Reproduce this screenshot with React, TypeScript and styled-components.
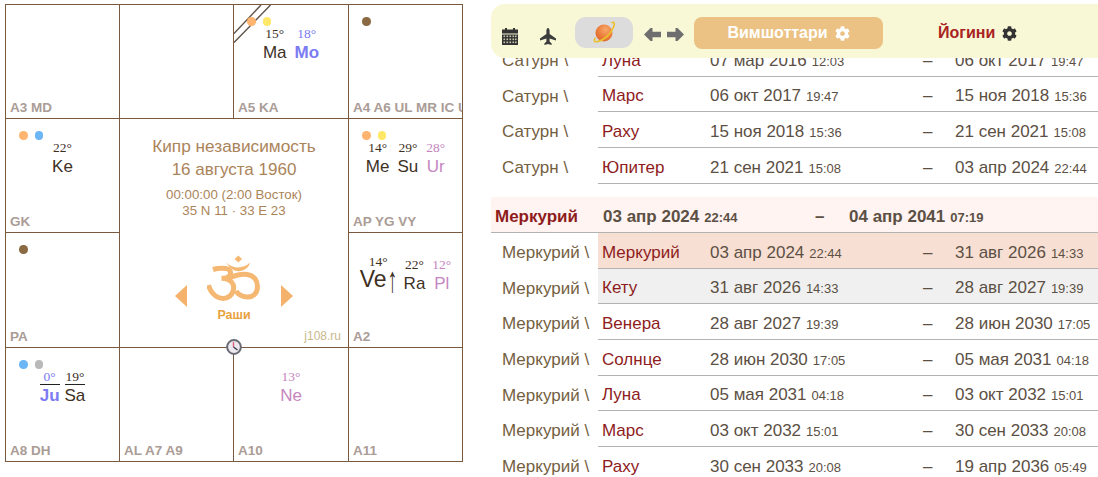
import React from "react";
import styled, { createGlobalStyle } from "styled-components";
import { FaCog } from "react-icons/fa";

const GlobalStyle = createGlobalStyle`
  html, body {
    margin: 0;
    background: #fff;
    font-family: "Liberation Sans", Arial, sans-serif;
  }
`;

type PlanetData = {
  name: string;
  degree: string;
  tone?: "dark" | "blue" | "pink";
  bold?: boolean;
  big?: boolean;
  ruled?: boolean;
  rising?: boolean;
};

type CellData = {
  label?: string;
  dots?: string[];
  planets?: PlanetData[];
  gap?: number;
  stripes?: boolean;
};

const toneColors = { dark: "#40301f", blue: "#7b7bf2", pink: "#c586c0" };

const ORANGE = "#ffb570";
const BLUE = "#6cb6f5";
const YELLOW = "#ffe868";
const BROWN = "#8a6a42";
const GRAY = "#b9b9b9";

const topCells: CellData[] = [
  { label: "A3 MD" },
  {},
  {
    label: "A5 KA",
    dots: [ORANGE, YELLOW],
    stripes: true,
    planets: [
      { name: "Ma", degree: "15°" },
      { name: "Mo", degree: "18°", tone: "blue", bold: true },
    ],
  },
  { label: "A4 A6 UL MR IC UP", dots: [BROWN] },
];

const bottomCells: CellData[] = [
  {
    label: "A8 DH",
    dots: [BLUE, GRAY],
    gap: 5,
    planets: [
      { name: "Ju", degree: "0°", tone: "blue", bold: true, ruled: true },
      { name: "Sa", degree: "19°", ruled: true },
    ],
  },
  { label: "AL A7 A9" },
  { label: "A10", planets: [{ name: "Ne", degree: "13°", tone: "pink" }] },
  { label: "A11" },
];

const keCell: CellData = {
  label: "GK",
  dots: [ORANGE, BLUE],
  planets: [{ name: "Ke", degree: "22°" }],
};
const meCell: CellData = {
  label: "AP YG VY",
  dots: [ORANGE, YELLOW],
  planets: [
    { name: "Me", degree: "14°" },
    { name: "Su", degree: "29°" },
    { name: "Ur", degree: "28°", tone: "pink" },
  ],
};
const paCell: CellData = { label: "PA", dots: [BROWN] };
const veCell: CellData = {
  label: "A2",
  gap: 7,
  planets: [
    { name: "Ve", degree: "14°", big: true, rising: true },
    { name: "Ra", degree: "22°" },
    { name: "Pl", degree: "12°", tone: "pink" },
  ],
};

type Period = {
  name: string;
  from: [string, string];
  to: [string, string];
  state?: "current" | "next";
};

const saturnRows: Period[] = [
  { name: "Луна", from: ["07 мар 2016", "12:03"], to: ["06 окт 2017", "19:47"] },
  { name: "Марс", from: ["06 окт 2017", "19:47"], to: ["15 ноя 2018", "15:36"] },
  { name: "Раху", from: ["15 ноя 2018", "15:36"], to: ["21 сен 2021", "15:08"] },
  { name: "Юпитер", from: ["21 сен 2021", "15:08"], to: ["03 апр 2024", "22:44"] },
];

const mercuryRows: Period[] = [
  { name: "Меркурий", from: ["03 апр 2024", "22:44"], to: ["31 авг 2026", "14:33"], state: "current" },
  { name: "Кету", from: ["31 авг 2026", "14:33"], to: ["28 авг 2027", "19:39"], state: "next" },
  { name: "Венера", from: ["28 авг 2027", "19:39"], to: ["28 июн 2030", "17:05"] },
  { name: "Солнце", from: ["28 июн 2030", "17:05"], to: ["05 мая 2031", "04:18"] },
  { name: "Луна", from: ["05 мая 2031", "04:18"], to: ["03 окт 2032", "15:01"] },
  { name: "Марс", from: ["03 окт 2032", "15:01"], to: ["30 сен 2033", "20:08"] },
  { name: "Раху", from: ["30 сен 2033", "20:08"], to: ["19 апр 2036", "05:49"] },
];

function CalendarIcon() {
  return (
    <svg width="16" height="17" viewBox="0 0 16 17" fill="#333">
      <rect x="3" y="0" width="2" height="3" />
      <rect x="11" y="0" width="2" height="3" />
      <rect x="0" y="1.5" width="16" height="4" />
      <path d="M0 6.5h16V17H0z" />
      <g fill="#f9f8d6" opacity="0.75">
        {[7.5, 10.5, 13.5].map((y) =>
          [1.5, 4.5, 7.5, 10.5, 13].map((x) => <rect key={`${x}-${y}`} x={x} y={y} width="1.6" height="1.6" />),
        )}
      </g>
    </svg>
  );
}

function PlaneIcon() {
  return (
    <svg width="16" height="17" viewBox="0 0 16 17" fill="#3c3c3c">
      <path d="M8 0c1 0 1.6 1.6 1.6 3.2V6L16 10.6V12.6L9.6 10.4V13.6L11.6 15.4V17L8 15.9 4.4 17V15.4L6.4 13.6V10.4L0 12.6V10.6L6.4 6V3.2C6.4 1.6 7 0 8 0z" />
    </svg>
  );
}

function ArrowIcon({ flip }: { flip?: boolean }) {
  return (
    <svg width="17" height="13" viewBox="0 0 17 13" fill="#6e6e6e" style={flip ? { transform: "scaleX(-1)" } : undefined}>
      <path d="M0 6.5 6.5 0 8.5 0 8.5 3.8H17V9.2H8.5V13H6.5z" />
    </svg>
  );
}

function PlanetIcon() {
  return (
    <svg width="24" height="24" viewBox="0 0 24 24">
      <defs>
        <radialGradient id="sphere" cx="0.6" cy="0.3" r="0.8">
          <stop offset="0" stopColor="#f6a868" />
          <stop offset="0.6" stopColor="#ec7a38" />
          <stop offset="1" stopColor="#d8602c" />
        </radialGradient>
      </defs>
      <circle cx="12" cy="12" r="8.5" fill="url(#sphere)" />
      <path d="M3 17.5C-.5 23 9 21 15 15.5S25-.5 20 1.5" fill="none" stroke="#e8c030" strokeWidth="1.7" strokeLinecap="round" />
    </svg>
  );
}

function OmIcon() {
  return (
    <svg width="54" height="48" viewBox="0 0 54 48" fill="none" stroke="#f5b873" strokeWidth="5">
      <path d="M31.3 1.5 35 5 31.3 8.5 27.6 5z" fill="#f5b873" stroke="none" />
      <path d="M19.5 8.5C24 14.5 36 15.5 43 8.5 40.5 19 25 21 19.5 8.5z" fill="#f5b873" stroke="none" />
      <path d="M6 15.5C11 14 16 14 19 14.5 25.5 15.5 26 24 14.5 24.3 24 24.5 27.5 30 26.5 35.5 25 43 18 46 11.5 43.5 6 41 3 37 1.5 31" />
      <path d="M20 25C27 22 33 19.5 40 20.5 47.5 21.5 50.5 27 50.5 32.5 50.5 39.5 46 43.5 40 43 35 42.5 31 40.5 29 37" />
    </svg>
  );
}

function ClockIcon() {
  return (
    <svg width="16" height="16" viewBox="0 0 16 16">
      <circle cx="8" cy="8" r="6.9" fill="#eceaf0" stroke="#6b6b76" strokeWidth="2" />
      <path d="M7.5 3V8" stroke="#e0607c" strokeWidth="1.4" />
      <path d="M7.5 8 11.5 11" stroke="#3a3a48" strokeWidth="1.4" />
    </svg>
  );
}

function StripesIcon() {
  return (
    <svg width="38" height="40" viewBox="0 0 38 40" fill="none" stroke="#5f5348" strokeWidth="1.4">
      <path d="M0 28.5 27 0" />
      <path d="M0 37.5 36.5 0" />
    </svg>
  );
}

const Page = styled.div`
  display: flex;
  align-items: flex-start;
  width: 1098px;
  height: 477px;
  overflow: hidden;
`;

const Chart = styled.div`
  position: relative;
  flex: none;
  display: grid;
  grid-template-columns: 114px 114px 115px 114px;
  grid-template-rows: 114px 114px 115px 114px;
  margin: 4px 0 0 5px;
  border-top: 1px solid #7a5a3e;
  border-left: 1px solid #7a5a3e;
`;

const Cell = styled.div`
  position: relative;
  display: flex;
  flex-direction: column;
  box-sizing: border-box;
  min-width: 0;
  padding-top: 12px;
  overflow: hidden;
  border-right: 1px solid #7a5a3e;
  border-bottom: 1px solid #7a5a3e;
`;

const Dots = styled.div`
  display: flex;
  gap: 7px;
  height: 9px;
  padding-left: 13px;
`;

const Dot = styled.span<{ $color: string }>`
  width: 8.5px;
  height: 8.5px;
  border-radius: 50%;
  background: ${(p) => p.$color};
  position: relative;
  z-index: 1;
`;

const Stripes = styled.div`
  position: absolute;
  top: 0;
  left: 0;
  line-height: 0;
`;

const Planets = styled.div<{ $gap: number }>`
  display: flex;
  align-items: flex-end;
  justify-content: center;
  gap: ${(p) => p.$gap}px;
  margin-top: 1px;
`;

const Planet = styled.div<{ $tone: keyof typeof toneColors }>`
  display: flex;
  flex-direction: column;
  align-items: center;
  color: ${(p) => toneColors[p.$tone]};
`;

const Degree = styled.span<{ $ruled?: boolean }>`
  align-self: stretch;
  margin-bottom: ${(p) => (p.$ruled ? 1 : 2)}px;
  text-align: center;
  font-family: "Liberation Serif", serif;
  font-size: 13.5px;
  line-height: 14px;
  ${(p) => p.$ruled && "border-bottom: 1px solid #222;"}
`;

const PlanetName = styled.span<{ $bold?: boolean; $big?: boolean }>`
  margin-top: ${(p) => (p.$big ? -4 : 0)}px;
  font-size: ${(p) => (p.$big ? 23 : 17)}px;
  font-weight: ${(p) => (p.$bold ? 700 : 400)};
  line-height: ${(p) => (p.$big ? 25 : 19)}px;
  white-space: nowrap;
`;

const RisingMark = styled.span`
  display: inline-block;
  margin: 0 -1px 0 1px;
  transform: scaleY(1.8);
  font-size: 20px;
`;

const HouseLabel = styled.div`
  margin-top: auto;
  padding: 0 0 3px 4px;
  font-size: 13.5px;
  font-weight: 700;
  line-height: 14px;
  color: #ab9c96;
  white-space: nowrap;
`;

const Center = styled.div`
  grid-column: 2 / 4;
  grid-row: 2 / 4;
  display: flex;
  flex-direction: column;
  align-items: center;
  box-sizing: border-box;
  padding-top: 15px;
  text-align: center;
  color: #ab845a;
  border-right: 1px solid #7a5a3e;
  border-bottom: 1px solid #7a5a3e;
`;

const Title = styled.div`
  font-size: 17.25px;
  line-height: 24px;
`;

const BirthDate = styled.div`
  font-size: 17px;
  line-height: 24px;
`;

const Meta = styled.div`
  margin-top: 5px;
  font-size: 13.3px;
  line-height: 16px;
`;

const Nav = styled.div`
  display: flex;
  align-items: flex-end;
  gap: 20px;
  margin-top: 35px;
  line-height: 0;
`;

const Triangle = styled.span<{ $right?: boolean }>`
  width: 0;
  height: 0;
  margin-bottom: -5px;
  border-top: 11px solid transparent;
  border-bottom: 11px solid transparent;
  ${(p) => (p.$right ? "border-left: 12px solid #f4b26c;" : "border-right: 12px solid #f4b26c;")}
`;

const ViewName = styled.div`
  margin-top: 6px;
  font-size: 12.5px;
  font-weight: 700;
  line-height: 14px;
  color: #e8a23e;
`;

const Credit = styled.div`
  align-self: flex-end;
  margin-top: auto;
  padding: 0 7px 4px 0;
  font-size: 12px;
  line-height: 14px;
  color: #c9b88c;
`;

const ClockPin = styled.div`
  position: absolute;
  left: 220px;
  top: 334px;
  line-height: 0;
`;

const Panel = styled.div`
  flex: none;
  width: 607px;
  margin: 4px 0 0 28px;
`;

const Toolbar = styled.div`
  position: relative;
  z-index: 1;
  display: flex;
  align-items: center;
  box-sizing: border-box;
  height: 54px;
  padding: 3px 0 0 11px;
  background: #f9f8d6;
  border-radius: 14px 0 0 14px;
`;

const ToolIcon = styled.span<{ $after: number }>`
  display: flex;
  margin: 7px ${(p) => p.$after}px 0 0;
`;

const PlanetPill = styled.span`
  display: flex;
  align-items: center;
  justify-content: center;
  width: 58px;
  height: 31px;
  margin-right: 11px;
  border-radius: 11px;
  background: #dcdcdc;
`;

const Arrows = styled.span`
  display: flex;
  gap: 6px;
  margin: 3px 10px 0 0;
`;

const ModeButton = styled.span`
  display: flex;
  align-items: center;
  justify-content: center;
  gap: 7px;
  width: 189px;
  height: 32px;
  border-radius: 8px;
  background: #ebc283;
  color: #fff;
  font-size: 16px;
  font-weight: 700;
  svg {
    margin-top: 2px;
  }
`;

const ModeLink = styled.span`
  display: flex;
  align-items: center;
  gap: 7px;
  margin-left: 55px;
  color: #a82222;
  font-size: 16px;
  font-weight: 700;
  svg {
    margin-top: 2px;
    color: #333;
  }
`;

const Clip = styled.div`
  height: 419px;
  overflow: hidden;
`;

const Rows = styled.div`
  margin-top: -17px;
`;

const Row = styled.div`
  display: flex;
  height: 35.67px;
  font-size: 17px;
`;

const RowLabel = styled.div`
  flex: none;
  box-sizing: border-box;
  width: 107px;
  padding-left: 11px;
  line-height: 40px;
  color: #74603f;
  white-space: nowrap;
`;

const Span = styled.div<{ $state?: Period["state"] }>`
  flex: 1;
  display: grid;
  grid-template-columns: 112px 213px 32px 1fr;
  align-items: center;
  box-sizing: border-box;
  padding-top: 5px;
  border-bottom: 1px solid #b2b2b2;
  color: #5c5044;
  white-space: nowrap;
  background: ${(p) => (p.$state === "current" ? "#f8dfd3" : p.$state === "next" ? "#f0f0f0" : "transparent")};
`;

const LordName = styled.div`
  padding-left: 4px;
  color: #8e1c1c;
`;

const Time = styled.small`
  margin-left: 5px;
  font-size: 13px;
`;

const GroupHeader = styled.div`
  display: flex;
  align-items: center;
  box-sizing: border-box;
  height: 36px;
  margin-top: 13.3px;
  padding-top: 5px;
  background: #fff4f2;
  border-bottom: 1px solid #b2b2b2;
  font-size: 17px;
  font-weight: 700;
  color: #5c5044;
  white-space: nowrap;
`;

const GroupLord = styled.div`
  flex: none;
  box-sizing: border-box;
  width: 112px;
  padding-left: 4px;
  color: #8e1c1c;
`;

const GroupFrom = styled.div`
  flex: none;
  width: 212px;
`;

const GroupDash = styled.div`
  flex: none;
  width: 34px;
`;

function House({ cell }: { cell: CellData }) {
  return (
    <Cell>
      {cell.stripes && (
        <Stripes>
          <StripesIcon />
        </Stripes>
      )}
      <Dots>
        {cell.dots?.map((color) => (
          <Dot key={color} $color={color} />
        ))}
      </Dots>
      {cell.planets && (
        <Planets $gap={cell.gap ?? 8}>
          {cell.planets.map((planet) => (
            <Planet key={planet.name} $tone={planet.tone ?? "dark"}>
              <Degree $ruled={planet.ruled}>{planet.degree}</Degree>
              <PlanetName $bold={planet.bold} $big={planet.big}>
                {planet.name}
                {planet.rising && <RisingMark>↑</RisingMark>}
              </PlanetName>
            </Planet>
          ))}
        </Planets>
      )}
      {cell.label && <HouseLabel>{cell.label}</HouseLabel>}
    </Cell>
  );
}

function PeriodRow({ lord, period }: { lord: string; period: Period }) {
  return (
    <Row>
      <RowLabel>{lord} \</RowLabel>
      <Span $state={period.state}>
        <LordName>{period.name}</LordName>
        <div>
          {period.from[0]}
          <Time>{period.from[1]}</Time>
        </div>
        <div>–</div>
        <div>
          {period.to[0]}
          <Time>{period.to[1]}</Time>
        </div>
      </Span>
    </Row>
  );
}

export default function App() {
  return (
    <Page>
      <GlobalStyle />
      <Chart>
        {topCells.map((cell, i) => (
          <House key={i} cell={cell} />
        ))}
        <House cell={keCell} />
        <Center>
          <Title>Кипр независимость</Title>
          <BirthDate>16 августа 1960</BirthDate>
          <Meta>
            00:00:00 (2:00 Восток)
            <br />
            35 N 11 · 33 E 23
          </Meta>
          <Nav>
            <Triangle />
            <OmIcon />
            <Triangle $right />
          </Nav>
          <ViewName>Раши</ViewName>
          <Credit>j108.ru</Credit>
        </Center>
        <House cell={meCell} />
        <House cell={paCell} />
        <House cell={veCell} />
        {bottomCells.map((cell, i) => (
          <House key={i} cell={cell} />
        ))}
        <ClockPin>
          <ClockIcon />
        </ClockPin>
      </Chart>
      <Panel>
        <Toolbar>
          <ToolIcon $after={22}>
            <CalendarIcon />
          </ToolIcon>
          <ToolIcon $after={19}>
            <PlaneIcon />
          </ToolIcon>
          <PlanetPill>
            <PlanetIcon />
          </PlanetPill>
          <Arrows>
            <ArrowIcon />
            <ArrowIcon flip />
          </Arrows>
          <ModeButton>
            Вимшоттари <FaCog size={15} />
          </ModeButton>
          <ModeLink>
            Йогини <FaCog size={15} />
          </ModeLink>
        </Toolbar>
        <Clip>
          <Rows>
            {saturnRows.map((period) => (
              <PeriodRow key={period.name} lord="Сатурн" period={period} />
            ))}
            <GroupHeader>
              <GroupLord>Меркурий</GroupLord>
              <GroupFrom>
                03 апр 2024
                <Time>22:44</Time>
              </GroupFrom>
              <GroupDash>–</GroupDash>
              <div>
                04 апр 2041
                <Time>07:19</Time>
              </div>
            </GroupHeader>
            {mercuryRows.map((period) => (
              <PeriodRow key={period.name} lord="Меркурий" period={period} />
            ))}
          </Rows>
        </Clip>
      </Panel>
    </Page>
  );
}
